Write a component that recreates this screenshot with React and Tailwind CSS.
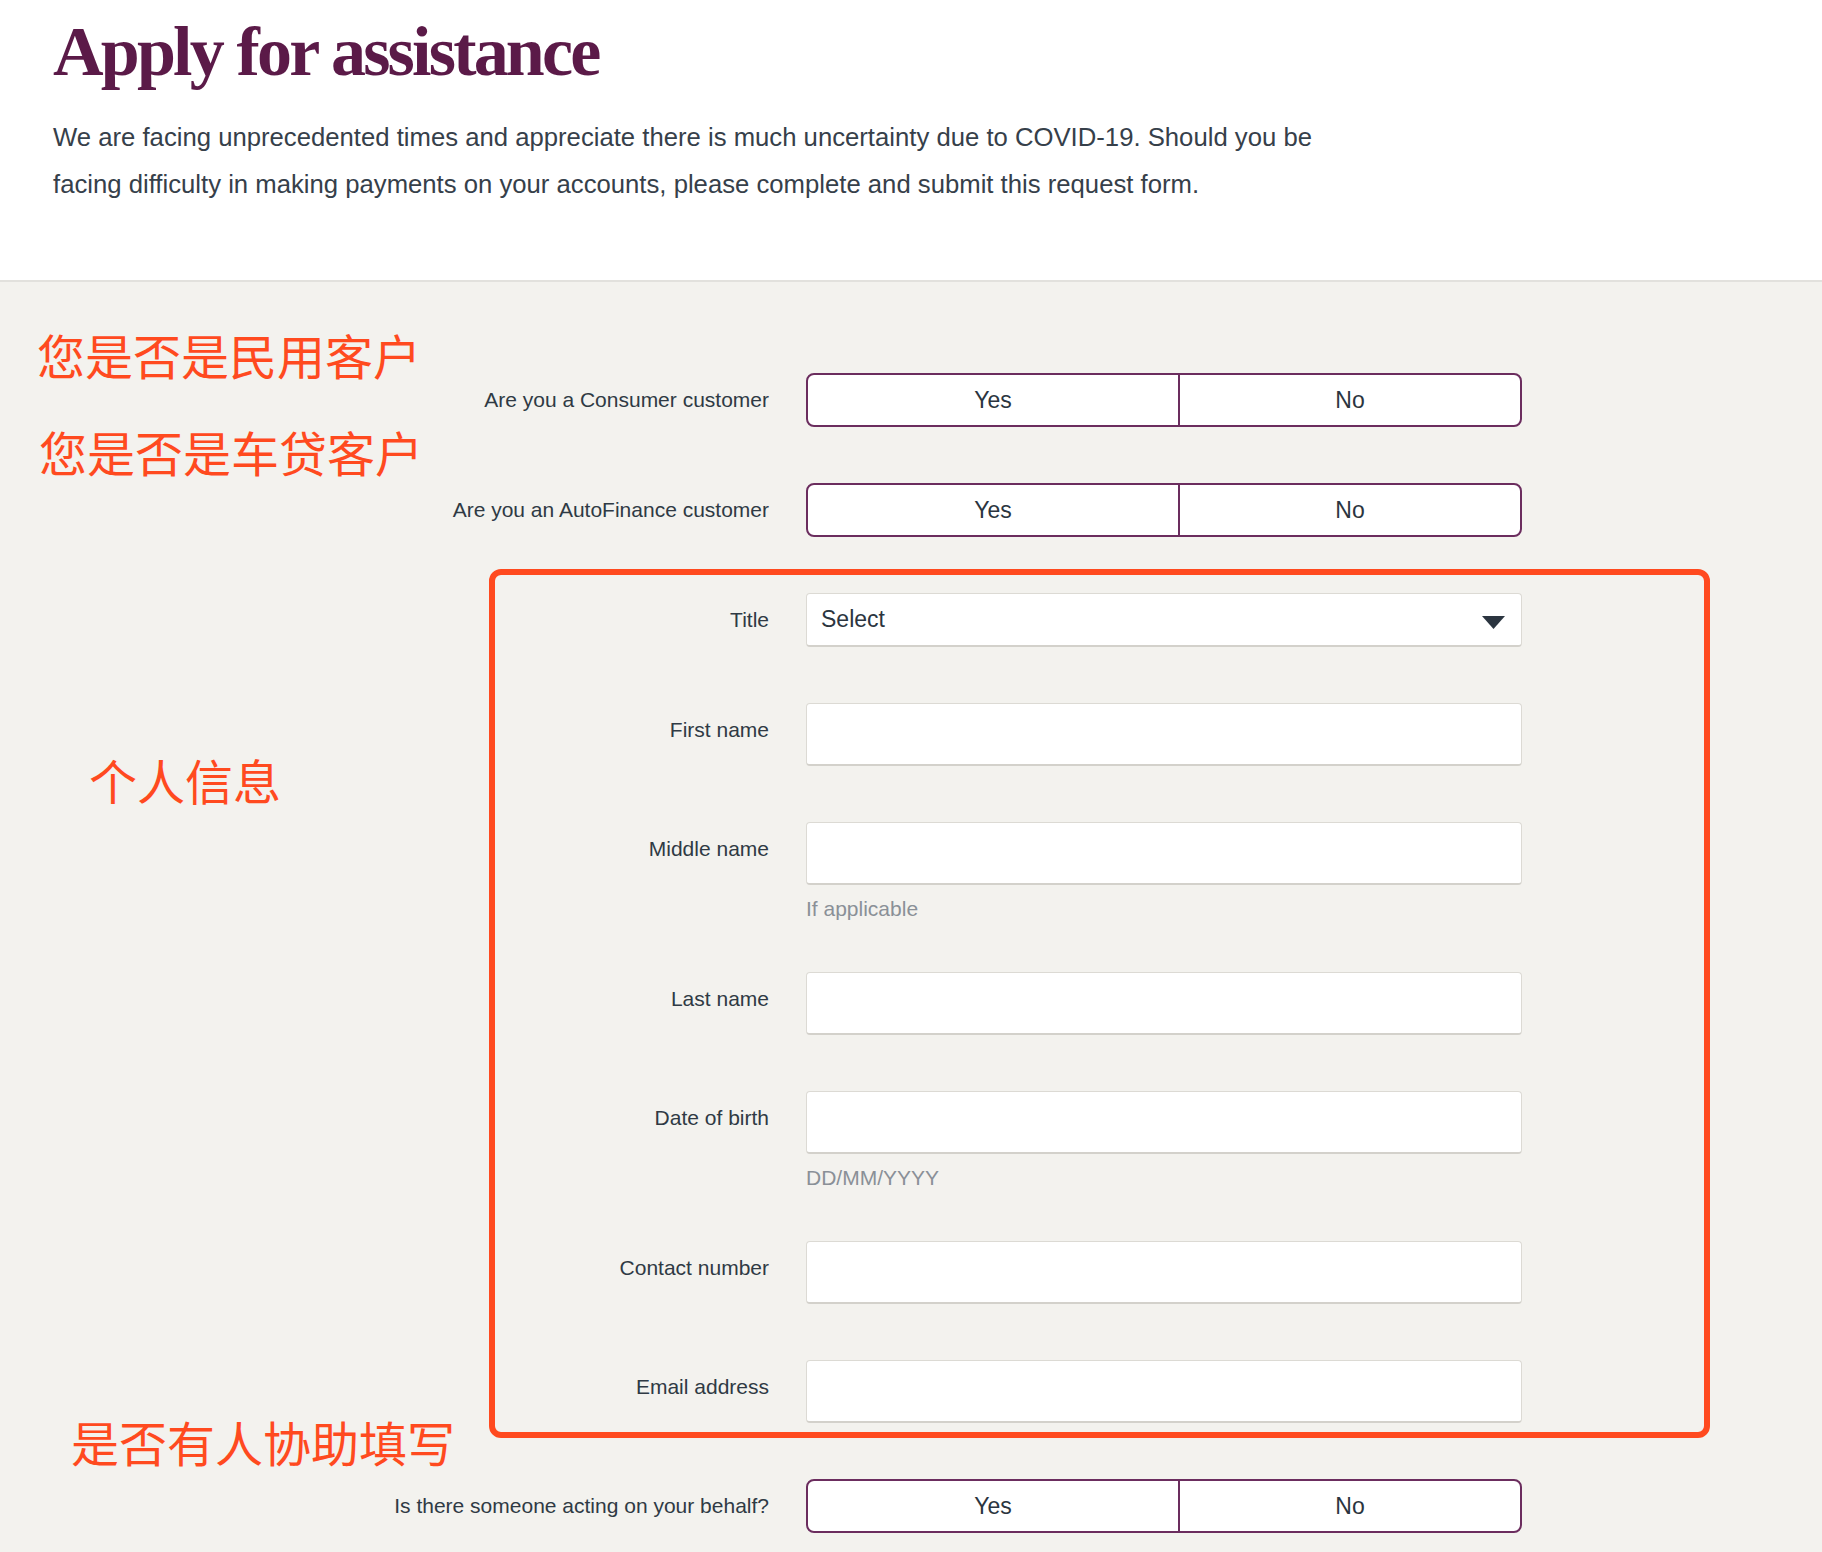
const SANS = "font-['Liberation_Sans',Arial,sans-serif]";

const FIELDS = [
  { label: "First name" },
  { label: "Middle name", hint: "If applicable" },
  { label: "Last name" },
  { label: "Date of birth", hint: "DD/MM/YYYY" },
  { label: "Contact number" },
  { label: "Email address" },
];

// red annotations drawn over the screenshot
const NOTES = [
  { text: "您是否是民用客户", cls: "left-[37px] top-[330px]" },
  { text: "您是否是车贷客户", cls: "left-[39px] top-[427px]" },
  { text: "个人信息", cls: "left-[89px] top-[755px]" },
  { text: "是否有人协助填写", cls: "left-[71px] top-[1417px]" },
];

function Row({ label, tall, children }) {
  return (
    <div className="flex items-start gap-[37px]">
      <div
        className={
          tall
            ? "w-[716px] shrink-0 h-[63px] pb-[9px] flex items-center justify-end text-right text-[21px] text-[#2f3a44]"
            : "w-[716px] shrink-0 h-[54px] flex items-center justify-end text-right text-[21px] text-[#2f3a44]"
        }
      >
        {label}
      </div>
      <div className="w-[716px]">{children}</div>
    </div>
  );
}

function YesNo() {
  return (
    <div className="h-[54px] flex rounded-[8px] border-2 border-[#6b2d5e] bg-white overflow-hidden text-[23px] text-[#2b3540]">
      <button type="button" className="w-[372px] border-r-2 border-[#6b2d5e] flex items-center justify-center">
        Yes
      </button>
      <button type="button" className="flex-1 flex items-center justify-center">
        No
      </button>
    </div>
  );
}

function TitleSelect() {
  return (
    <div className="h-[54px] flex items-center justify-between pl-[14px] pr-[16px] bg-white rounded-[4px] border border-[#dcdad4] border-b-2 border-b-[#d3d1cb] text-[23px] text-[#2b3540]">
      <span>Select</span>
      <svg width="23" height="13" viewBox="0 0 23 13" className="mt-[6px]">
        <polygon points="0,0 23,0 11.5,13" fill="#2b3540" />
      </svg>
    </div>
  );
}

function TextInput({ hint }) {
  return (
    <>
      <div className="h-[63px] bg-white rounded-[4px] border border-[#dcdad4] border-b-2 border-b-[#d3d1cb]" />
      {hint && <p className="mt-[17px] leading-[14px] text-[21px] text-[#8a9097]">{hint}</p>}
    </>
  );
}

export default function App() {
  return (
    <div className={`relative min-h-[1552px] bg-[#f3f2ee] ${SANS}`}>
      {/* Header */}
      <header className="bg-white border-b-2 border-[#e2e1dd] px-[53px] pt-[17px] pb-[73px]">
        <h1 className="font-['Liberation_Serif',serif] font-bold text-[70px] leading-none tracking-[-0.04em] text-[#5b1a48]">
          Apply for assistance
        </h1>
        <p className="mt-[27px] text-[25.7px] leading-[46.5px] text-[#36404a]">
          We are facing unprecedented times and appreciate there is much uncertainty due to COVID-19. Should you be
          <br />
          facing difficulty in making payments on your accounts, please complete and submit this request form.
        </p>
      </header>

      {/* Form */}
      <section className="px-[53px] pt-[91px] pb-[19px] flex flex-col gap-[56px]">
        <Row label="Are you a Consumer customer">
          <YesNo />
        </Row>
        <Row label="Are you an AutoFinance customer">
          <YesNo />
        </Row>
        <Row label="Title">
          <TitleSelect />
        </Row>
        {FIELDS.map(({ label, hint }) => (
          <Row key={label} label={label} tall>
            <TextInput hint={hint} />
          </Row>
        ))}
        <Row label="Is there someone acting on your behalf?">
          <YesNo />
        </Row>
      </section>

      {/* Annotations */}
      <div className="absolute left-[489px] top-[569px] w-[1221px] h-[869px] border-[6px] border-[#ff4a1f] rounded-[12px] pointer-events-none" />
      {NOTES.map(({ text, cls }) => (
        <div
          key={text}
          className={`absolute ${cls} font-['Noto_Sans_CJK_SC',sans-serif] text-[48px] leading-none text-[#ff4a1f] whitespace-nowrap`}
        >
          {text}
        </div>
      ))}
    </div>
  );
}
